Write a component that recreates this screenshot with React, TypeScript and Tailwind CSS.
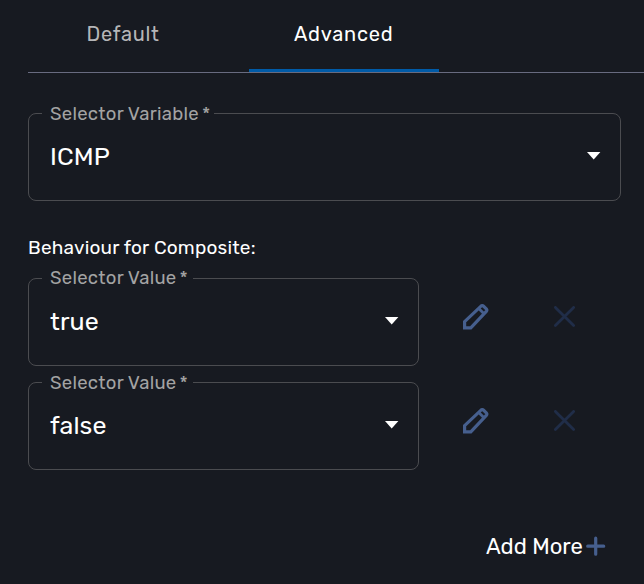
import React from "react";

function Pencil() {
  return (
    <svg className="h-[26px] w-[26px]" viewBox="0 0 26 26" fill="none" stroke="#465f8e" strokeWidth="3.2">
      <path d="M1.6 23.9V17.6L18 2.1Q19.3 1.1 20.6 2.3L23.3 4.9Q24.4 6.1 23.3 7.4L7.8 23.9Z" />
      <path d="M15.8 4.6L21.2 10" strokeWidth="2.8" />
    </svg>
  );
}

function Cross() {
  return (
    <svg className="h-[22px] w-[22px]" viewBox="0 0 22 22" fill="none" stroke="#202d48" strokeWidth="2.8" strokeLinecap="round">
      <path d="M1.4 1.4L19.6 19.6M19.6 1.4L1.4 19.6" />
    </svg>
  );
}

function Select({ label, labelClass, value, valueClass, width }: {
  label: string; labelClass: string; value: string; valueClass: string; width: string;
}) {
  return (
    <div className={`relative flex h-[88px] items-center justify-between rounded-lg border border-[#4b4c50] pr-[19px] pl-[21px] ${width}`}>
      <div className={`absolute left-[13px] flex h-6 items-center bg-[#171a21] pl-2 text-[18.5px] whitespace-nowrap text-[#a3a3a3] ${labelClass}`}>
        <span>{label}</span>
        <span className="ml-[3px]">*</span>
      </div>
      <span className={`text-[25px] leading-8 text-white ${valueClass}`}>{value}</span>
      <svg className="mb-[3px] h-[8px] w-[14px]" viewBox="0 0 14 8" fill="white">
        <path d="M0 0H13.4L6.7 7.5Z" />
      </svg>
    </div>
  );
}

function Row({ value, labelClass }: { value: string; labelClass: string }) {
  return (
    <div className="flex">
      <Select label="Selector Value" labelClass={`w-[151px] tracking-[0.27px] ${labelClass}`} value={value} valueClass="tracking-[0.1px]" width="w-[391px]" />
      <div className="mt-[26px] ml-[44px]"><Pencil /></div>
      <div className="mt-[28px] ml-[65px]"><Cross /></div>
    </div>
  );
}

export default function App() {
  return (
    <main className="h-[584px] w-[644px] overflow-hidden bg-[#171a21] pl-7 font-['Rubik','Roboto',sans-serif]">
      <nav className="flex h-[73px] border-b border-[#686b80] text-[20px] leading-[28px]">
        <div className="w-[221px] pt-5 pl-[58.5px] tracking-[0.7px] text-[#b5b6b8]">Default</div>
        <div className="w-[190px] border-b-[3px] border-[#005ba8] pt-5 pl-[45px] tracking-[0.78px] text-white">Advanced</div>
      </nav>
      <section className="pt-10">
        <Select label="Selector Variable" labelClass="-top-[11px] w-[172px] tracking-[0.27px]" value="ICMP" valueClass="tracking-[0.15px]" width="w-[593px]" />
        <h2 className="mt-[33px] mb-4 h-7 text-[19px] leading-[28px] tracking-[0.19px] text-white">Behaviour for Composite:</h2>
        <div className="flex flex-col gap-4">
          <Row value="true" labelClass="-top-3" />
          <Row value="false" labelClass="-top-[11px]" />
        </div>
      </section>
      <div className="mt-[60px] flex h-8 items-center pl-[458px] text-[22px] text-white">
        <span className="w-[100px] whitespace-nowrap">Add More</span>
        <svg className="h-5 w-5" viewBox="0 0 20 20" stroke="#465f8e" strokeWidth="3.2" strokeLinecap="round">
          <path d="M1.7 10.2H17.7M9.7 2.2V18.2" />
        </svg>
      </div>
    </main>
  );
}
